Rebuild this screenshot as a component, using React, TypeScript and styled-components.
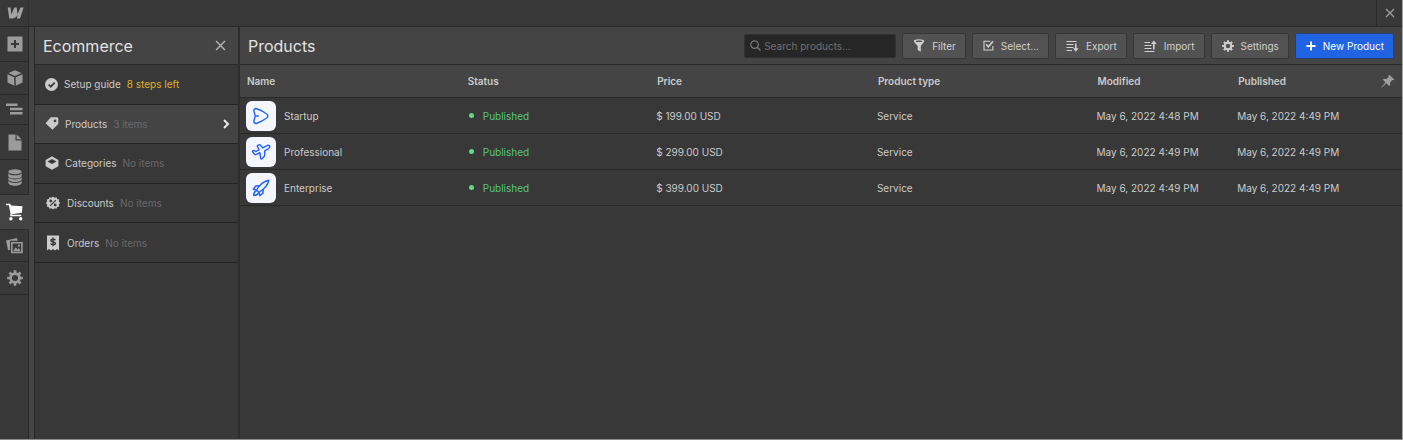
import React from "react";
import styled, { createGlobalStyle, css } from "styled-components";

const GlobalStyle = createGlobalStyle`
  *, *::before, *::after { box-sizing: border-box; }
  body {
    margin: 0;
    background: #383838;
    color: #cbcbcb;
    font-family: Inter, "Liberation Sans", sans-serif;
    font-size: 10px;
    line-height: 14px;
  }
  button, input { font: inherit; color: inherit; }
  button { cursor: pointer; }
  svg { display: block; flex: none; }
`;

const line = "#292929";

const Shell = styled.div`
  display: flex;
  flex-direction: column;
  min-height: 100vh;
  border-right: 1px solid #a6a6a6;
  border-bottom: 1px solid #8c8c8c;
`;

const TopBar = styled.header`
  display: flex;
  justify-content: space-between;
  height: 27px;
  border-bottom: 1px solid ${line};
`;

const bareButton = css`
  display: flex;
  align-items: center;
  justify-content: center;
  padding: 0;
  border: 0;
  background: none;
`;

const HomeLink = styled.a`
  display: flex;
  align-items: center;
  justify-content: center;
  width: 29px;
  padding-left: 2px;
  color: #a3a3a3;
  border-right: 1px solid #303030;
`;

const CloseButton = styled.button`
  ${bareButton}
  width: 26px;
  color: #9c9c9c;
  border-left: 1px solid ${line};
`;

const Body = styled.div`
  display: flex;
  flex: 1;
`;

const Rail = styled.nav`
  display: flex;
  flex-direction: column;
  width: 35px;
  background: #444444;
  border-right: 1px solid ${line};
`;

const RailButton = styled.button<{ $height: number; $active?: boolean }>`
  ${bareButton}
  width: 29px;
  height: ${(p) => p.$height}px;
  padding-left: 1px;
  color: ${(p) => (p.$active ? "#ffffff" : "#9b9b9b")};
  background: ${(p) => (p.$active ? "#444444" : "#383838")};
  border-right: 1px solid ${(p) => (p.$active ? "#444444" : line)};
  border-bottom: 1px solid ${line};
`;

const RailRest = styled.div`
  flex: 1;
  width: 29px;
  background: #383838;
  border-right: 1px solid ${line};
`;

const Sidebar = styled.aside`
  width: 205px;
  border-right: 2px solid #2d2d2d;
`;

const Bar = styled.div`
  display: flex;
  align-items: center;
  gap: 6px;
  height: 38px;
  padding: 0 8px;
  background: #444444;
  border-bottom: 1px solid ${line};
`;

const Title = styled.h1`
  flex: 1;
  margin: 0;
  font-size: 16px;
  line-height: 24px;
  font-weight: 400;
  color: #e2e2e2;
`;

const PanelClose = styled.button`
  ${bareButton}
  width: 20px;
  height: 20px;
  color: #b4b4b4;
`;

const SectionList = styled.ul`
  display: grid;
  grid-auto-rows: 1fr;
  height: 198px;
  margin: 0;
  padding: 0;
  list-style: none;
`;

const Section = styled.li`
  display: flex;
`;

const SectionLink = styled.a<{ $active?: boolean }>`
  display: flex;
  flex: 1;
  align-items: center;
  gap: 6px;
  padding: 0 8px 0 10px;
  color: #cbcbcb;
  text-decoration: none;
  background: ${(p) => (p.$active ? "#444444" : "#383838")};
  border-bottom: 1px solid #232323;
`;

const SectionNote = styled.span<{ $warn?: boolean }>`
  flex: 1;
  color: ${(p) => (p.$warn ? "#e0af26" : "#6a6a6a")};
`;

const Main = styled.main`
  flex: 1;
  min-width: 0;
`;

const SearchBox = styled.label`
  display: flex;
  align-items: center;
  gap: 3px;
  width: 152px;
  height: 24px;
  padding: 0 5px;
  color: #7a7a7a;
  background: #262626;
  border: 1px solid #303030;
  border-radius: 2px;
`;

const SearchInput = styled.input`
  flex: 1;
  min-width: 0;
  padding: 0;
  color: #d4d4d4;
  background: none;
  border: 0;
  outline: 0;
  &::placeholder { color: #707070; opacity: 1; }
`;

const ToolButton = styled.button<{ $primary?: boolean }>`
  display: flex;
  align-items: center;
  gap: 7px;
  height: 26px;
  padding: 0 9px 0 10px;
  white-space: nowrap;
  color: ${(p) => (p.$primary ? "#ffffff" : "#d0d0d0")};
  background: ${(p) => (p.$primary ? "#2164e3" : "#525252")};
  border: 1px solid ${(p) => (p.$primary ? "#26406f" : "#363636")};
  border-radius: 2px;
`;

const Table = styled.table`
  width: 100%;
  table-layout: fixed;
  border-collapse: separate;
  border-spacing: 0;
`;

const Col = styled.col<{ $width: string }>`
  width: ${(p) => p.$width};
`;

const HeadCell = styled.th`
  height: 33px;
  padding: 0 7px;
  text-align: left;
  font-weight: 600;
  background: #444444;
  border-bottom: 1px solid ${line};
`;

const HeadInner = styled.div`
  display: flex;
  align-items: center;
  justify-content: space-between;
`;

const PinButton = styled.button`
  ${bareButton}
  color: #a0a0a0;
`;

const Cell = styled.td`
  height: 36px;
  padding: 0 6px;
  white-space: nowrap;
  border-bottom: 1px solid ${line};
`;

const ProductName = styled.div`
  display: flex;
  align-items: center;
  gap: 8px;
`;

const Thumb = styled.span`
  display: flex;
  align-items: center;
  justify-content: center;
  width: 30px;
  height: 30px;
  color: #2b66f6;
  background: #f3f6ff;
  border-radius: 6px;
`;

const Status = styled.span`
  display: flex;
  align-items: center;
  gap: 9px;
  padding-left: 2px;
  color: #58c67b;
  &::before {
    content: "";
    width: 5px;
    height: 5px;
    border-radius: 50%;
    background: #62d98a;
  }
`;

type IconProps = { w?: number; h?: number; box?: string; children: React.ReactNode };
const Icon = ({ w = 16, h = w, box = "0 0 16 16", children }: IconProps) => (
  <svg width={w} height={h} viewBox={box} fill="currentColor" aria-hidden="true">
    {children}
  </svg>
);
const stroke = { fill: "none", stroke: "currentColor" } as const;

const Logo = () => (
  <Icon w={17} h={12} box="0 0 17 12">
    <path d="M16.600.5 13 11.400H9.800l1.200-3.900C9.900 9.700 8.200 11 5.600 11.400H2.300L.7.5h2.800l.9 7L7.200.5h2.600l.8 6.700L13.500.5z" />
  </Icon>
);
const CloseIcon = ({ size }: { size: number }) => (
  <Icon w={size} box="0 0 10 10">
    <path d="m1 1 8 8M9 1 1 9" {...stroke} strokeWidth="1.3" />
  </Icon>
);
const AddIcon = () => (
  <Icon>
    <path fillRule="evenodd" d="M1 .5h14a.5.5 0 0 1 .5.5v14a.5.5 0 0 1-.5.5H1a.5.5 0 0 1-.5-.5V1A.5.5 0 0 1 1 .5zM7 4v3H4v2h3v3h2V9h3V7H9V4z" />
  </Icon>
);
const CubeIcon = () => (
  <Icon>
    <path d="M8 .2 14.600 3 8 6 1.400 3zM.5 4.200 7.300 7.300v8.400L.5 12.400zM15.500 4.200 8.700 7.300v8.400l6.800-3.300z" />
  </Icon>
);
const NavigatorIcon = () => (
  <Icon w={17} h={14} box="0 0 17 14">
    <path d="M0 .5h11.500V3H0zM4 4.800h12.500v2.400H4zM4 9h12.500v2.400H4z" />
  </Icon>
);
const PageIcon = () => (
  <Icon w={14} h={17} box="0 0 14 17">
    <path d="M.5.5h7v6h6v10H.5zM8.700.5l4.800 4.800H8.700z" />
  </Icon>
);
const DatabaseIcon = () => (
  <Icon w={14} h={17} box="0 0 14 17">
    <ellipse cx="7" cy="2.800" rx="6.700" ry="2.500" />
    <path d="M.3 4.300C1.500 6 4 6.300 7 6.300s5.500-.3 6.700-2v2.500C13.700 8.800 10.500 9.600 7 9.600S.3 8.800.3 6.800zM.3 8.300c1.200 1.500 3.700 2.100 6.700 2.100s5.500-.6 6.700-2.100v1.700c0 2-3.200 3-6.700 3s-6.700-1-6.700-3zM.3 11.700c1.200 1.500 3.700 2.200 6.700 2.200s5.500-.7 6.700-2.200v1.800c0 2.100-3.200 3.200-6.700 3.200s-6.700-1.100-6.700-3.200z" />
  </Icon>
);
const CartIcon = () => (
  <Icon w={17} h={18} box="0 0 17 18">
    <path d="M0 .7h4.200l.9 1.900 11.400.6-.6 6.600-10.300 1.500v.5h9.600v1.400H4.100l.4-2.500L2.900 2.200H0z" />
    <circle cx="4.900" cy="15.800" r="1.700" />
    <circle cx="14.700" cy="15.800" r="1.700" />
  </Icon>
);
const AssetsIcon = () => (
  <Icon w={17} h={16} box="0 0 17 16">
    <path d="M0 2.500 11 0l.5 2.700H4v9.200l-1.900.4z" />
    <path fillRule="evenodd" d="M5 4h11.800v11.300H5zM6.600 5.600v8.100h8.600V5.600z" />
    <path d="M7 13.200 9.700 9.200l1.800 2.200 1.400-1.300 1.800 3.100z" />
    <circle cx="12.900" cy="7.700" r="1.100" />
  </Icon>
);
const GearIcon = ({ size }: { size: number }) => (
  <Icon w={size}>
    <circle cx="8" cy="8" r="4.400" {...stroke} strokeWidth="2.700" />
    <path
      d="M8 .2v3.500M8 12.300v3.500M.2 8h3.500M12.300 8h3.500M2.500 2.500l2.400 2.400M11.100 11.100l2.400 2.400M13.500 2.500l-2.400 2.400M4.900 11.100l-2.400 2.400"
      {...stroke}
      strokeWidth="2.700"
    />
  </Icon>
);
const CheckCircleIcon = () => (
  <Icon w={13} box="0 0 14 14">
    <circle cx="7" cy="7" r="7" />
    <path d="m3.900 7 2.300 2.300 4.200-4.400" fill="none" stroke="#383838" strokeWidth="1.900" />
  </Icon>
);
const TagIcon = () => (
  <Icon w={14} h={13} box="0 0 14 13">
    <path fillRule="evenodd" d="M5.800.3h6.500l1 .9v5.900L7.400 12.800.5 6.300zM10 2.500a1.400 1.400 0 1 0 0 2.800 1.400 1.400 0 0 0 0-2.800z" />
  </Icon>
);
const CategoryIcon = () => (
  <Icon w={14} box="0 0 14 14">
    <path fillRule="evenodd" d="M7 .3 13.400 4v6.200L7 13.800.6 10.200V4zM7 2.900 2.500 5.400 7 8l4.500-2.600z" />
  </Icon>
);
const DiscountIcon = () => (
  <Icon w={16} box="-1 -1 18 18">
    <path d="m8 .6 1.800 1.500 2.200-.7.700 2.200 2.300.5-.5 2.200L16 8l-1.500 1.700.5 2.200-2.300.5-.7 2.200-2.200-.6L8 15.400 6.200 14l-2.200.6-.7-2.200-2.300-.5.5-2.200L0 8l1.500-1.700L1 4.100l2.300-.5L4 1.400l2.200.7z" />
    <g fill="none" stroke="#383838" strokeWidth="1.400">
      <path d="m4.700 11.300 6.600-6.600" />
      <circle cx="5.500" cy="5.700" r=".9" />
      <circle cx="10.500" cy="10.300" r=".9" />
    </g>
  </Icon>
);
const OrderIcon = () => (
  <Icon w={16} box="0 0 16 16">
    <path d="M2 .5h12v15l-2-1.600-2 1.600-2-1.600-2 1.600-2-1.600-2 1.600z" />
    <path
      d="M10.400 5.200C10 4.100 5.800 3.800 5.800 5.600c0 1.700 4.600 1 4.600 2.800 0 1.700-4.300 1.600-4.800.2M8 2.600v8.700"
      fill="none"
      stroke="#383838"
      strokeWidth="1.400"
    />
  </Icon>
);
const ChevronIcon = () => (
  <Icon w={8} h={10} box="0 0 8 10">
    <path d="m2 1 4 4-4 4" {...stroke} stroke="#f0f0f0" strokeWidth="1.900" />
  </Icon>
);
const SearchIcon = () => (
  <Icon w={11} box="0 0 11 11">
    <circle cx="4.600" cy="4.600" r="3.800" {...stroke} strokeWidth="1.200" />
    <path d="m7.300 7.300 3.200 3.200" {...stroke} strokeWidth="1.300" />
  </Icon>
);
const FilterIcon = () => (
  <Icon w={12} h={13} box="0 0 12 13">
    <path fillRule="evenodd" d="M6 .2c3 0 5.200.7 5.200 1.900 0 .7-.6 1.500-3.400 5v5.700L4.700 11V7.100C1.500 3.600.8 2.800.8 2.100.8.9 3 .2 6 .2zm0 1.200c-2 0-3.500.3-3.500.8s1.500.9 3.500.9 3.500-.4 3.500-.9S8 1.400 6 1.400z" />
  </Icon>
);
const SelectIcon = () => (
  <Icon w={11} box="0 0 12 12">
    <path d="M8 1.300H1.100v9.600h9.600V6.500" {...stroke} strokeWidth="1.200" />
    <path d="m3.400 4.800 2.400 2.600 5.100-5.900" {...stroke} strokeWidth="1.700" />
  </Icon>
);
const ExportIcon = () => (
  <Icon w={13} h={12} box="0 0 13 12">
    <path d="M.5 1.500h10M.5 4.500h7M.5 7.500h7M.5 10.500h5.500" {...stroke} strokeWidth="1" />
    <path d="M9 3.500h1.600v4.800h2L9.800 11.700 7 8.300h2z" />
  </Icon>
);
const ImportIcon = () => (
  <Icon w={13} h={12} box="0 0 13 12">
    <path d="M.5 2.500h5.500M.5 5.500h7M.5 8.500h7M.5 11.500h10" {...stroke} strokeWidth="1" />
    <path d="M9 9.500h1.600V4h2L9.800.6 7 4h2z" />
  </Icon>
);
const PlusIcon = () => (
  <Icon w={10} box="0 0 10 10">
    <path d="M5 .5v9M.5 5h9" {...stroke} strokeWidth="1.800" />
  </Icon>
);
const PinIcon = () => (
  <Icon w={14} box="0 0 14 14">
    <path d="m8.300.8 4.900 4.700-1 .7-1-.1-2.100 2.300.1 2.600-1.100 1L5.400 9.300.8 13.500l-.4-.4L4.500 8.500 1.900 5.800l1-1 2.700.1L7.700 2.700l-.1-1z" />
  </Icon>
);

const thumbStroke = { ...stroke, strokeWidth: 1.5, strokeLinejoin: "round", strokeLinecap: "round" } as const;
const PaperIcon = () => (
  <Icon w={18} box="0 0 18 18">
    <path d="M2 4.400C1.500 2.300 3 1.200 4.900 1.800c3.500 1.200 6.500 2.800 9.800 5.200 1.500 1.200 1.500 2.800 0 4-3.300 2.400-6.300 4-9.800 5.200-1.900.6-3.400-.5-2.900-2.600L3 9.900a4 4 0 0 0 0-1.800zM3.200 9h3.200" {...thumbStroke} />
  </Icon>
);
const PlaneIcon = () => (
  <Icon w={20} h={18} box="0 0 20 18">
    <path d="M11.800 4.900 9.500 2.200C8.700 1.500 6.200 2 6.300 3L8 6.800 5 8.400 2.900 7.600c-.9-.2-1.600.4-1.200 1.200l1.600 2.300c.5.6 1.300.6 2 .3L9 9.800l.6 5.400c.2 1 1 1.200 1.700.4l1.800-2c.5-.6.6-1.200.6-2V7.800l3.400-2c1.400-.9 2-2 1.500-2.800s-1.700-.9-3-.2z" {...thumbStroke} />
  </Icon>
);
const RocketIcon = () => (
  <Icon w={20} box="0 0 20 20">
    <path d="M5.500 12C8 7.500 12 3.500 17.800 2.200c-.8 5.500-5.300 9.400-9.800 12.100zM8.300 7.800 4.800 8 2.300 11.200l3.200.8M12.200 11.700 12 15.200l-3.200 2.500-.8-3.400M5.200 12.700c-1.700.8-2.400 2.500-2.500 4.700 2.300 0 4-.8 4.700-2.500" {...thumbStroke} />
  </Icon>
);

const railItems = [
  { label: "Add", icon: <AddIcon />, height: 35 },
  { label: "Symbols", icon: <CubeIcon />, height: 33 },
  { label: "Navigator", icon: <NavigatorIcon />, height: 30 },
  { label: "Pages", icon: <PageIcon />, height: 35 },
  { label: "Collections", icon: <DatabaseIcon />, height: 35 },
  { label: "Ecommerce", icon: <CartIcon />, height: 35, active: true },
  { label: "Assets", icon: <AssetsIcon />, height: 32 },
  { label: "Settings", icon: <GearIcon size={16} />, height: 33 },
];

const sections = [
  { name: "Setup guide", note: "8 steps left", icon: <CheckCircleIcon />, warn: true },
  { name: "Products", note: "3 items", icon: <TagIcon />, active: true },
  { name: "Categories", note: "No items", icon: <CategoryIcon /> },
  { name: "Discounts", note: "No items", icon: <DiscountIcon /> },
  { name: "Orders", note: "No items", icon: <OrderIcon /> },
];

const tools = [
  { label: "Filter", icon: <FilterIcon /> },
  { label: "Select...", icon: <SelectIcon /> },
  { label: "Export", icon: <ExportIcon /> },
  { label: "Import", icon: <ImportIcon /> },
  { label: "Settings", icon: <GearIcon size={12} /> },
  { label: "New Product", icon: <PlusIcon />, primary: true },
];

const columns = [
  { label: "Name", width: "19%" },
  { label: "Status", width: "16.3%" },
  { label: "Price", width: "19%" },
  { label: "Product type", width: "18.9%" },
  { label: "Modified", width: "12.1%" },
  { label: "Published", width: "14.7%" },
];

const products = [
  { name: "Startup", price: "$ 199.00 USD", modified: "May 6, 2022 4:48 PM", icon: <PaperIcon /> },
  { name: "Professional", price: "$ 299.00 USD", modified: "May 6, 2022 4:49 PM", icon: <PlaneIcon /> },
  { name: "Enterprise", price: "$ 399.00 USD", modified: "May 6, 2022 4:49 PM", icon: <RocketIcon /> },
];

export default function App() {
  return (
    <Shell>
      <GlobalStyle />
      <TopBar>
        <HomeLink href="#" aria-label="Dashboard"><Logo /></HomeLink>
        <CloseButton aria-label="Close"><CloseIcon size={10} /></CloseButton>
      </TopBar>
      <Body>
        <Rail>
          {railItems.map((r) => (
            <RailButton key={r.label} aria-label={r.label} $height={r.height} $active={r.active}>
              {r.icon}
            </RailButton>
          ))}
          <RailRest />
        </Rail>
        <Sidebar>
          <Bar>
            <Title as="h2">Ecommerce</Title>
            <PanelClose aria-label="Close panel"><CloseIcon size={11} /></PanelClose>
          </Bar>
          <SectionList>
            {sections.map((s) => (
              <Section key={s.name}>
                <SectionLink href="#" $active={s.active}>
                  {s.icon}
                  <span>{s.name}</span>
                  <SectionNote $warn={s.warn}>{s.note}</SectionNote>
                  {s.active && <ChevronIcon />}
                </SectionLink>
              </Section>
            ))}
          </SectionList>
        </Sidebar>
        <Main>
          <Bar>
            <Title>Products</Title>
            <SearchBox>
              <SearchIcon />
              <SearchInput type="search" placeholder="Search products..." aria-label="Search products" />
            </SearchBox>
            {tools.map((t) => (
              <ToolButton key={t.label} $primary={t.primary}>
                {t.icon}
                {t.label}
              </ToolButton>
            ))}
          </Bar>
          <Table>
            <colgroup>
              {columns.map((c) => <Col key={c.label} $width={c.width} />)}
            </colgroup>
            <thead>
              <tr>
                {columns.map((c, i) => (
                  <HeadCell key={c.label} scope="col">
                    <HeadInner>
                      {c.label}
                      {i === columns.length - 1 && <PinButton aria-label="Pin columns"><PinIcon /></PinButton>}
                    </HeadInner>
                  </HeadCell>
                ))}
              </tr>
            </thead>
            <tbody>
              {products.map((p) => (
                <tr key={p.name}>
                  <Cell>
                    <ProductName>
                      <Thumb>{p.icon}</Thumb>
                      {p.name}
                    </ProductName>
                  </Cell>
                  <Cell><Status>Published</Status></Cell>
                  <Cell>{p.price}</Cell>
                  <Cell>Service</Cell>
                  <Cell>{p.modified}</Cell>
                  <Cell>May 6, 2022 4:49 PM</Cell>
                </tr>
              ))}
            </tbody>
          </Table>
        </Main>
      </Body>
    </Shell>
  );
}
